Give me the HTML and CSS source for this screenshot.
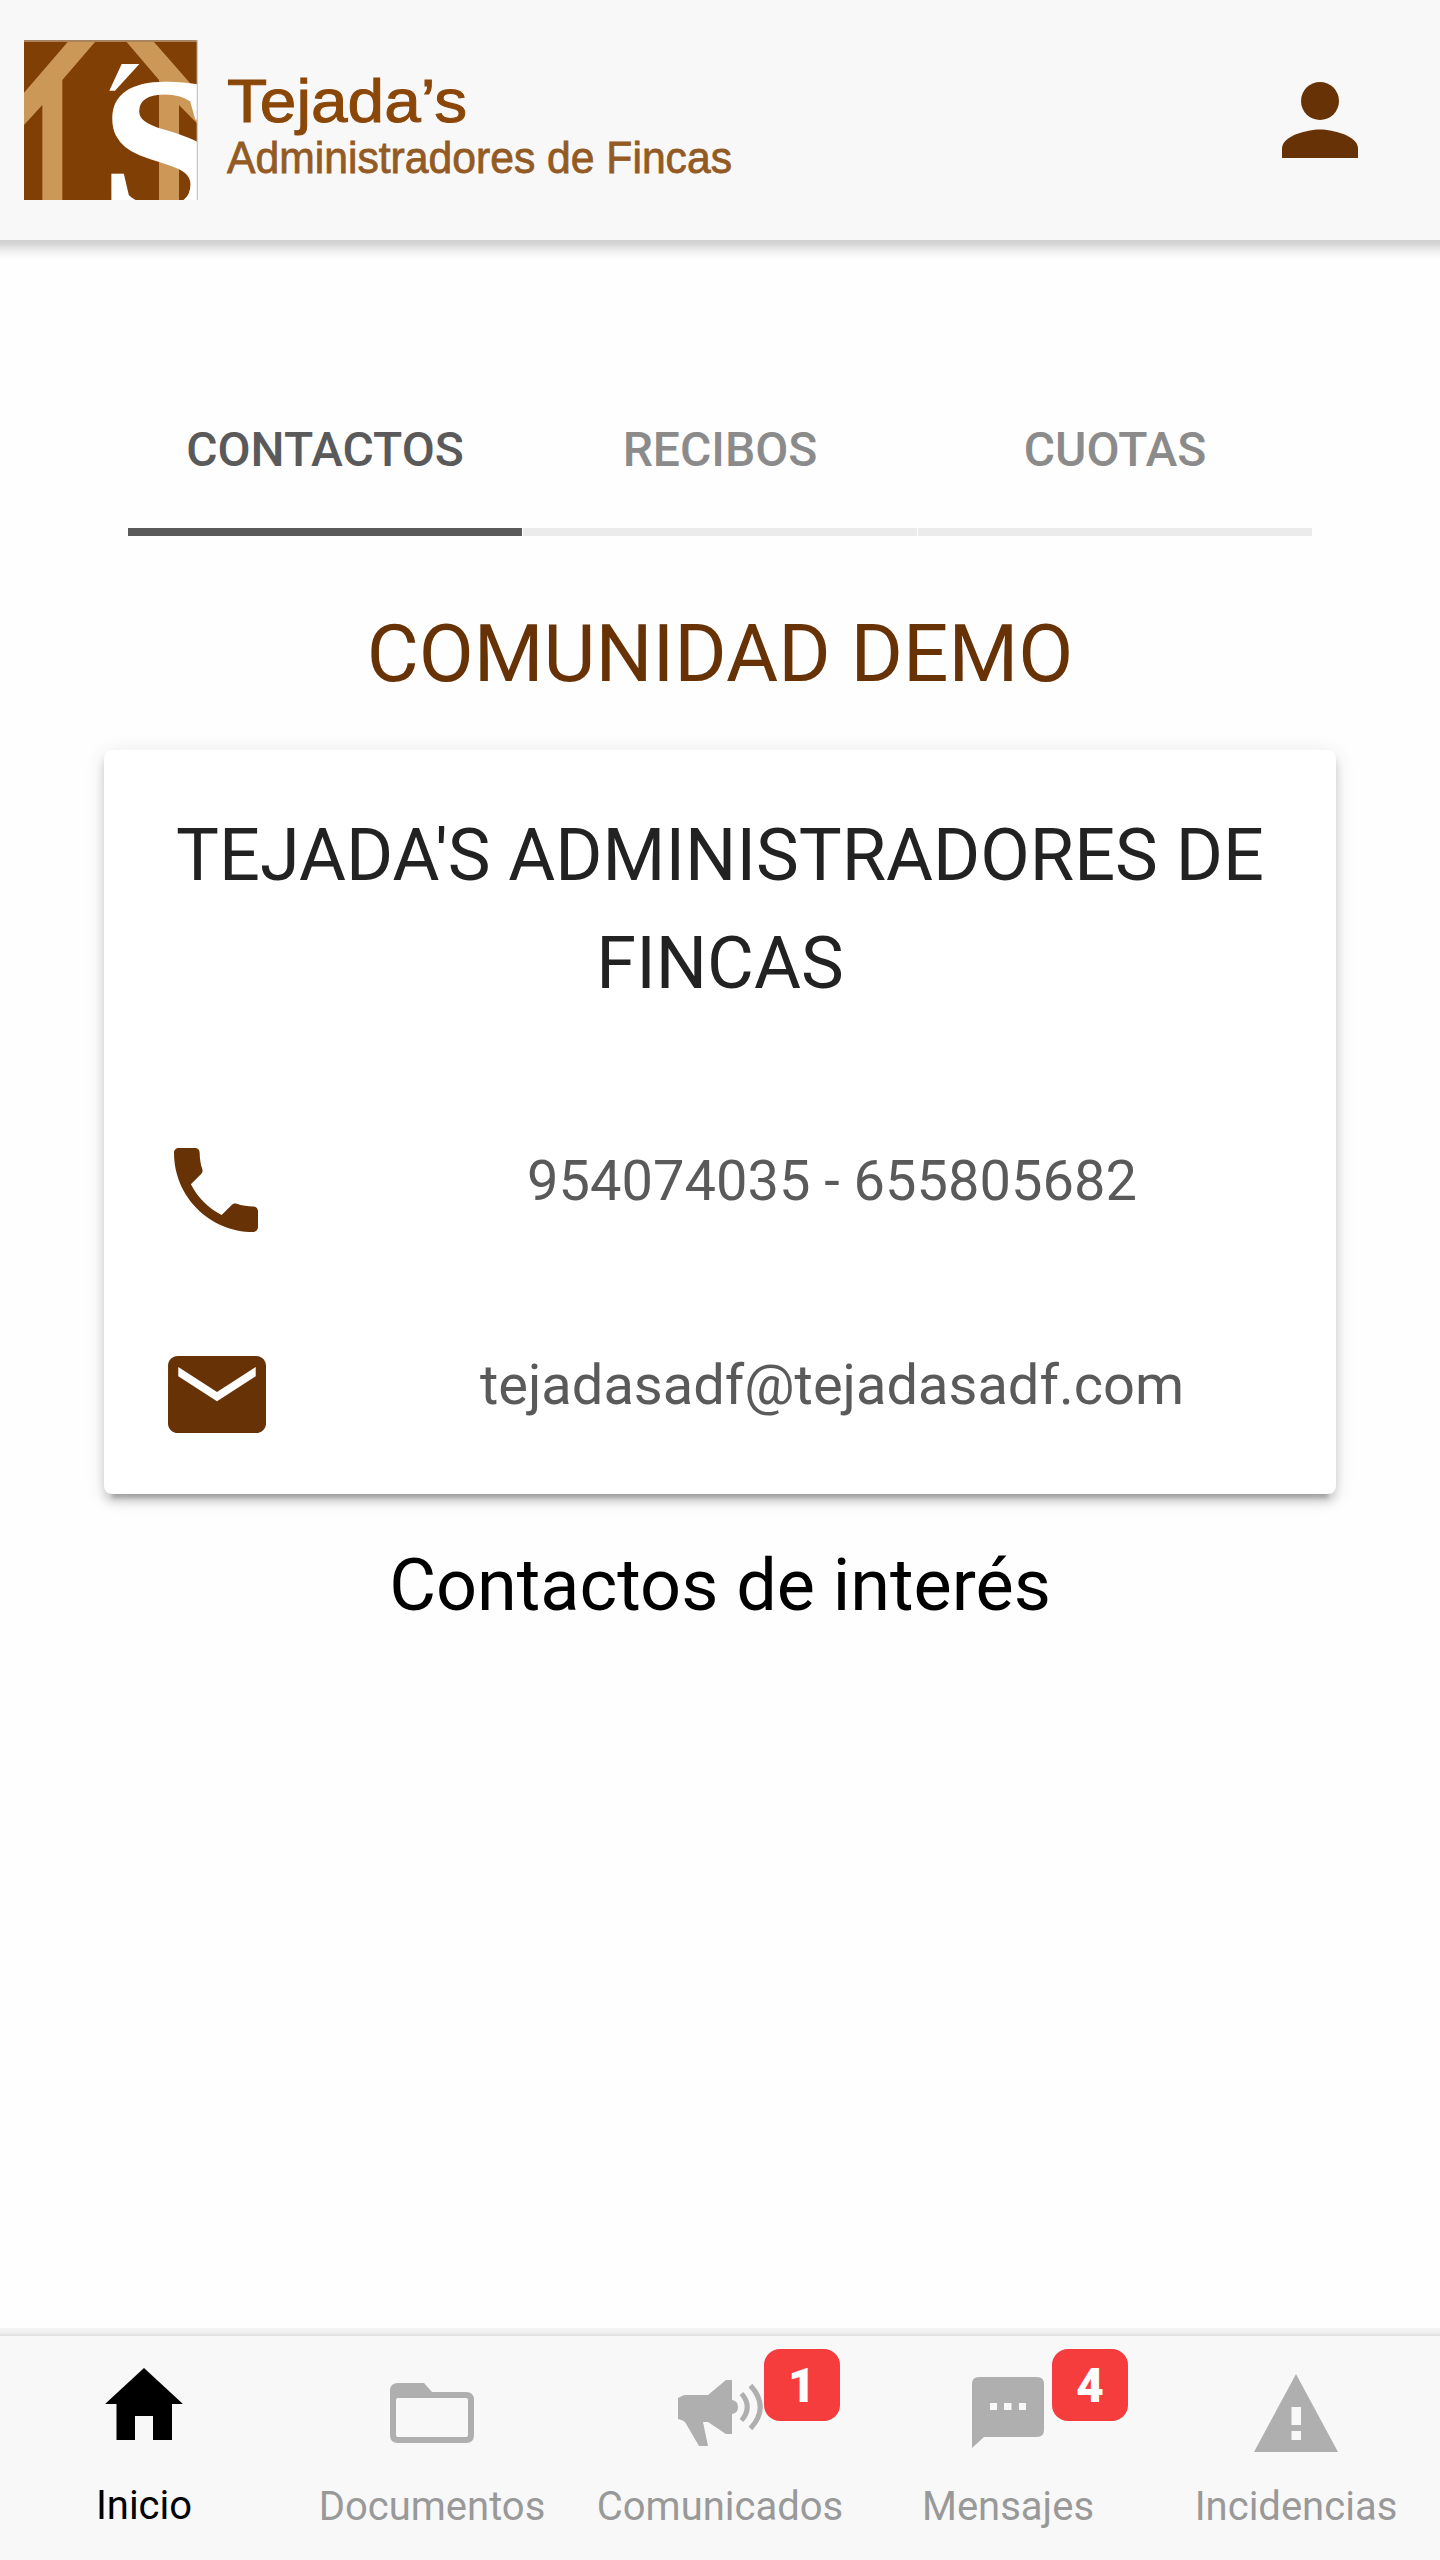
FILE: index.html
```html
<!DOCTYPE html>
<html lang="es">
<head>
<meta charset="utf-8">
<title>Tejada's Administradores de Fincas</title>
<link rel="stylesheet" href="styles.css">
</head>
<body>
<div class="app">
  <header class="header">
    <div class="brand">
      <svg class="logo" viewBox="72 60 522 480" preserveAspectRatio="none">
        <rect x="72" y="60" width="519" height="480" fill="#803f04"/>
        <path fill="#cc9858" d="M205 64H287L187 180V540H127V255L72 315V218ZM378 64H460L593 215V312L537 255V540H477V180Z"/>
        <rect x="72" y="60" width="519" height="6" fill="#a9835f"/>
        <path fill="#fff" d="M365 132H418L345 212H328Z"/>
        <text class="logo-letter" transform="translate(303 586) scale(1.13 1)" font-size="595">S</text>
        <rect x="590" y="60" width="4" height="480" fill="#c9c9cb"/>
      </svg>
      <svg class="wordmark" viewBox="0 0 540 160">
        <text class="logo-name" x="29" y="82" textLength="240" lengthAdjust="spacingAndGlyphs">Tejada’s</text>
        <text class="logo-tag" x="29" y="133" textLength="505" lengthAdjust="spacingAndGlyphs">Administradores de Fincas</text>
      </svg>
    </div>
    <svg class="user" viewBox="0 0 76 76"><circle cx="38" cy="19" r="19"/><path d="M38 47.500C25 47.500 0 54 0 66.500V76H76V66.500C76 54 51 47.500 38 47.500Z"/></svg>
  </header>
  <div class="header-shadow"></div>

  <main class="content">
    <nav class="segments">
      <a class="segment active">CONTACTOS</a>
      <a class="segment">RECIBOS</a>
      <a class="segment">CUOTAS</a>
    </nav>
    <h1 class="community">COMUNIDAD DEMO</h1>
    <section class="card">
      <h2 class="card-title">TEJADA'S ADMINISTRADORES DE FINCAS</h2>
      <div class="row">
        <div class="row-icon"><svg class="phone" viewBox="3 3 18 18"><path d="M6.620 10.790c1.440 2.830 3.760 5.140 6.590 6.590l2.200-2.200c.27-.27.67-.36 1.020-.24 1.120.37 2.330.57 3.570.57.55 0 1 .45 1 1V20c0 .55-.45 1-1 1-9.390 0-17-7.610-17-17 0-.55.45-1 1-1h3.500c.55 0 1 .45 1 1 0 1.250.2 2.450.57 3.570.11.35.03.74-.25 1.020l-2.200 2.200z"/></svg></div>
        <span class="row-text">954074035 - 655805682</span>
      </div>
      <div class="row">
        <div class="row-icon"><svg class="mail" viewBox="2 4 20 16" preserveAspectRatio="none"><path d="M20 4H4c-1.100 0-1.990.9-1.990 2L2 18c0 1.100.9 2 2 2h16c1.100 0 2-.9 2-2V6c0-1.100-.9-2-2-2zm-.1 4.200L12 13.400 4.100 8.200V6.300L12 11.500l7.900-5.200z"/></svg></div>
        <span class="row-text">tejadasadf@tejadasadf.com</span>
      </div>
    </section>
    <h2 class="interest">Contactos de interés</h2>
  </main>

  <div class="tabs-shadow"></div>
  <nav class="tabs">
    <a class="tab active">
      <svg class="tab-icon" viewBox="96 2356 96 96"><path d="M144 2368L183 2404H172V2440H153V2416H135V2440H116.500V2404H105Z"/></svg>
      <span class="label">Inicio</span>
    </a>
    <a class="tab">
      <svg class="tab-icon" viewBox="384 2364 96 96"><path fill-rule="evenodd" d="M398 2383H424L432 2392H466Q474 2392 474 2400V2435Q474 2443 466 2443H398Q390 2443 390 2435V2391Q390 2383 398 2383ZM398 2398Q396 2398 396 2400V2435Q396 2437 398 2437H466Q468 2437 468 2435V2400Q468 2398 466 2398Z"/></svg>
      <span class="label">Documentos</span>
    </a>
    <a class="tab">
      <svg class="tab-icon" viewBox="672 2364 96 96"><path d="M678 2398L684 2395H708L726 2380H732V2400Q738 2401 738 2407T732 2414V2434H726L708 2422H703L708 2446H699L685 2422Q683 2420 678 2419Z"/><path class="wave" d="M741.500 2393.500Q753 2407 741.500 2420.500M750.500 2385.500Q770 2407 750.500 2428.500"/></svg>
      <span class="badge">1</span>
      <span class="label">Comunicados</span>
    </a>
    <a class="tab">
      <svg class="tab-icon" viewBox="960 2364 96 96"><path fill-rule="evenodd" d="M979 2377H1037Q1044 2377 1044 2384V2430Q1044 2437 1037 2437H984L972 2448V2384Q972 2377 979 2377ZM990 2403V2410H997V2403ZM1004 2403V2410H1011.500V2403ZM1019 2403V2410H1026V2403Z"/></svg>
      <span class="badge">4</span>
      <span class="label">Mensajes</span>
    </a>
    <a class="tab">
      <svg class="tab-icon" viewBox="1248 2364 96 96"><path fill-rule="evenodd" d="M1296 2374L1338 2452H1254ZM1291.500 2407V2425H1301V2407ZM1291.500 2431V2440H1301V2431Z"/></svg>
      <span class="label">Incidencias</span>
    </a>
  </nav>
</div>
</body>
</html>
```
FILE: styles.css
```css
* { box-sizing: border-box; }
body { margin: 0; background: #fefefe; font-family: Roboto, "Liberation Sans", sans-serif; }
h1, h2 { margin: 0; font-weight: 400; text-align: center; }
svg { display: block; flex: none; }

.app { width: 1440px; height: 2560px; display: flex; flex-direction: column; overflow: hidden; }

.header { height: 240px; padding: 0 82px 0 24px; display: flex; align-items: center; justify-content: space-between; background: #f8f8f8; }
.brand { display: flex; }
.logo { width: 174px; height: 160px; }
.wordmark { width: 540px; height: 160px; overflow: visible; }
.logo-letter { font-family: "Liberation Serif", serif; font-weight: 700; fill: #fff; stroke: #fff; stroke-width: 8; }
.logo-name { font: 62px "Liberation Sans", sans-serif; fill: #8a4708; stroke: #8a4708; stroke-width: 1; }
.logo-tag { font: 44px "Liberation Sans", sans-serif; fill: #935a24; stroke: #935a24; stroke-width: .8; }
.user { width: 76px; height: 76px; fill: #673306; }
.header-shadow { height: 20px; background: linear-gradient(#d0d0d0 0, #d6d6d6 20%, #ececec 50%, #f9f9f9 78%, #fefefe); }

.content { flex: 1; padding: 124px 104px 0; }
.segments { display: grid; grid-template-columns: repeat(3, 1fr); height: 152px; margin: 0 24px; gap: 1px; }
.segment { padding-top: 38px; border-bottom: 8px solid #ebebeb; color: #8c8b8b; font-size: 48px; font-weight: 500; line-height: 56px; text-align: center; }
.segment.active { color: #5a5a5a; border-color: #5a5a5a; }
.community { margin-top: 71px; color: #673306; font-size: 80px; line-height: 94px; }

.card { height: 744px; margin-top: 49px; padding: 52px 64px 0; border-radius: 8px; background: #fff; box-shadow: 0 8px 8px rgba(0,0,0,.14), 0 12px 4px -8px rgba(0,0,0,.2), 0 4px 20px rgba(0,0,0,.12); }
.card-title { color: #222; font-size: 72px; line-height: 108px; margin-bottom: 70px; }
.row { display: flex; align-items: center; height: 204px; }
.row-icon { width: 112px; display: flex; justify-content: flex-start; fill: #673306; }
.row-text { flex: 1; padding-left: 112px; margin-top: -19px; color: #5a5a5a; font-size: 56px; line-height: 84px; text-align: center; }
.phone { width: 84px; height: 84px; margin-left: 6px; }
.mail { width: 98px; height: 77px; }
.interest { margin-top: 50px; color: #000; font-size: 72px; line-height: 84px; }

.tabs-shadow { height: 8px; background: linear-gradient(#f6f6f6, #efefef 60%, #dedede); }
.tabs { display: grid; grid-template-columns: repeat(5, 1fr); height: 224px; background: #f8f8f8; }
.tab { position: relative; display: flex; flex-direction: column; align-items: center; justify-content: space-between; padding: 28px 0 29px; color: #999; fill: #afafaf; }
.tab.active { padding: 20px 0 30px; color: #000; fill: #000; }
.tab-icon { width: 96px; height: 96px; }
.wave { fill: none; stroke: #afafaf; stroke-width: 5; }
.label { font-size: 40px; line-height: 48px; }
.badge { position: absolute; top: 13px; left: 188px; width: 76px; height: 72px; border-radius: 16px; background: #f53d3d; color: #fff; font-size: 48px; font-weight: 900; line-height: 74px; text-align: center; }
```
